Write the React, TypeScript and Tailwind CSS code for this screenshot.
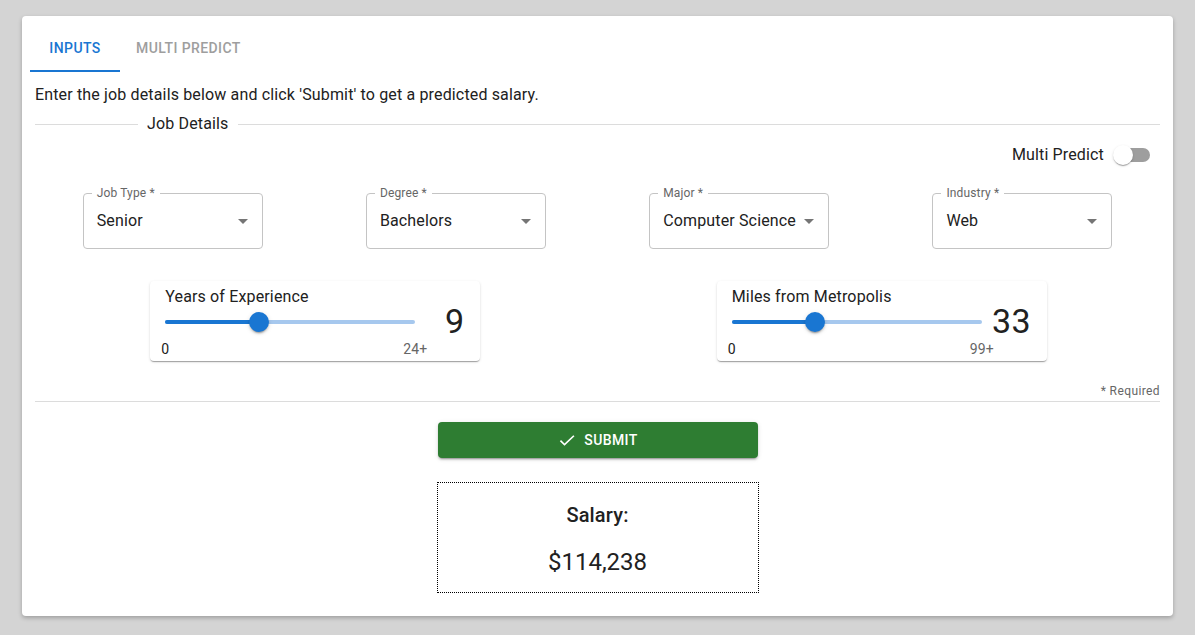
import React from 'react';

const FONT = { fontFamily: 'Roboto, "Liberation Sans", sans-serif' };

function SelectBox({ label, value }: { label: string; value: string }) {
  return (
    <div className="flex justify-center">
      <div className="relative h-[56px] w-[180px] rounded-[4px] border border-[#c4c4c4] flex items-center pl-[13px] pr-[7px]">
        <span className="absolute left-[8px] top-[-9px] bg-white px-[5px] text-[12px] leading-[16px] tracking-[0.15px] text-[#666]">
          {label}
        </span>
        <span className="flex-1 text-[16px] tracking-[0.15px] text-[#212121] whitespace-nowrap">{value}</span>
        <svg viewBox="0 0 24 24" className="h-6 w-6 fill-[#757575]">
          <path d="M7 10l5 5 5-5z" />
        </svg>
      </div>
    </div>
  );
}

function SliderCard({ label, value, max, maxLabel }: { label: string; value: number; max: number; maxLabel: string }) {
  const pct = (value / max) * 100;
  return (
    <div className="flex justify-center">
      <div className="h-[80px] w-[330px] rounded-[4px] bg-white shadow-[0_2px_1px_-1px_rgba(0,0,0,0.2),0_1px_1px_0_rgba(0,0,0,0.14),0_1px_3px_0_rgba(0,0,0,0.12)] flex items-start justify-between pl-[15px] pr-[16px] pt-[4px]">
        <div className="w-[250px]">
          <div className="text-[16px] leading-[24px] tracking-[0.15px] text-[#212121]">{label}</div>
          <div className="relative h-[44px]">
            <div className="absolute left-0 right-0 top-[11px] h-[4px] rounded-full bg-[#a6c8ee]" />
            <div className="absolute left-0 top-[11px] h-[4px] rounded-full bg-[#1976d2]" style={{ width: `${pct}%` }} />
            <div
              className="absolute top-[3px] h-[20px] w-[20px] -ml-[10px] rounded-full bg-[#1976d2] shadow-[0_3px_1px_-2px_rgba(0,0,0,0.2),0_2px_2px_0_rgba(0,0,0,0.14),0_1px_5px_0_rgba(0,0,0,0.12)]"
              style={{ left: `${pct}%` }}
            />
            <span className="absolute left-0 top-[30px] -translate-x-1/2 text-[14px] leading-[20px] tracking-[0.15px] text-[#212121]">0</span>
            <span className="absolute left-full top-[30px] -translate-x-1/2 text-[14px] leading-[20px] tracking-[0.15px] text-[#666]">{maxLabel}</span>
          </div>
        </div>
        <div className="mt-[16px] text-[34px] leading-[40px] tracking-[0.25px] text-[#212121]">{value}</div>
      </div>
    </div>
  );
}

export default function App() {
  return (
    <div className="min-h-[635px] bg-[#d4d4d4] px-[22px] pt-[16px] pb-[19px]" style={FONT}>
      <div className="h-[600px] rounded-[4px] bg-white shadow-[0_2px_4px_rgba(0,0,0,0.25)] px-[8px] pt-[8px]">
        {/* tabs */}
        <div className="flex h-[48px]">
          <div className="relative flex w-[90px] items-center justify-center text-[14px] font-medium tracking-[0.4px] text-[#1976d2]">
            INPUTS
            <div className="absolute bottom-0 left-0 right-0 h-[2px] bg-[#1976d2]" />
          </div>
          <div className="flex items-center px-[16px] text-[14px] font-medium tracking-[0.4px] text-[#9e9e9e]">
            MULTI PREDICT
          </div>
        </div>

        <div className="px-[5px]">
          <p className="mt-[11px] text-[16px] leading-[24px] tracking-[0.15px] text-[#212121]">
            Enter the job details below and click 'Submit' to get a predicted salary.
          </p>

          <div className="mt-[5px] flex h-[24px] items-center">
            <div className="h-px w-[103px] bg-[#dcdcdc]" />
            <span className="px-[9px] text-[16px] tracking-[0.15px] text-[#212121]">Job Details</span>
            <div className="h-px flex-1 bg-[#dcdcdc]" />
          </div>

          <div className="mt-[7px] flex h-[24px] items-center justify-end pr-[10px]">
            <span className="text-[16px] tracking-[0.15px] text-[#212121]">Multi Predict</span>
            <div className="relative ml-[10px] h-[14px] w-[36px]">
              <div className="absolute left-[2px] right-0 top-0 h-[14px] rounded-full bg-[#9e9e9e]" />
              <div className="absolute left-[-1px] top-[-3px] h-[20px] w-[20px] rounded-full bg-white shadow-[0_2px_1px_-1px_rgba(0,0,0,0.2),0_1px_1px_0_rgba(0,0,0,0.14),0_1px_3px_0_rgba(0,0,0,0.12)]" />
            </div>
          </div>

          <div className="-mx-[4px] mt-[26px] grid grid-cols-4">
            <SelectBox label="Job Type *" value="Senior" />
            <SelectBox label="Degree *" value="Bachelors" />
            <SelectBox label="Major *" value="Computer Science" />
            <SelectBox label="Industry *" value="Web" />
          </div>

          <div className="-ml-[3px] -mr-[5px] mt-[32px] grid grid-cols-2">
            <SliderCard label="Years of Experience" value={9} max={24} maxLabel="24+" />
            <SliderCard label="Miles from Metropolis" value={33} max={99} maxLabel="99+" />
          </div>

          <div className="mt-[22px] text-right text-[12px] leading-[16px] tracking-[0.4px] text-[#666]">* Required</div>
          <div className="mt-[2px] h-px bg-[#dcdcdc]" />

          <div className="mt-[20px] flex justify-center">
            <div className="flex h-[36px] w-[320px] items-center justify-center gap-[7px] rounded-[4px] bg-[#2e7d32] text-[14px] font-medium tracking-[0.4px] text-white shadow-[0_3px_1px_-2px_rgba(0,0,0,0.2),0_2px_2px_0_rgba(0,0,0,0.14),0_1px_5px_0_rgba(0,0,0,0.12)]">
              <svg viewBox="0 0 24 24" className="h-[20px] w-[20px] fill-white">
                <path d="M9 16.17 4.83 12l-1.42 1.41L9 19 21 7.59 19.59 6.17z" />
              </svg>
              SUBMIT
            </div>
          </div>

          <div className="mt-[24px] flex justify-center">
            <div className="flex h-[111px] w-[322px] flex-col items-center border border-dotted border-black">
              <div className="mt-[17px] text-[20px] font-medium leading-[30px] tracking-[0.15px] text-[#212121]">Salary:</div>
              <div className="mt-[16px] text-[24px] leading-[32px] text-[#212121]">$114,238</div>
            </div>
          </div>
        </div>
      </div>
    </div>
  );
}
